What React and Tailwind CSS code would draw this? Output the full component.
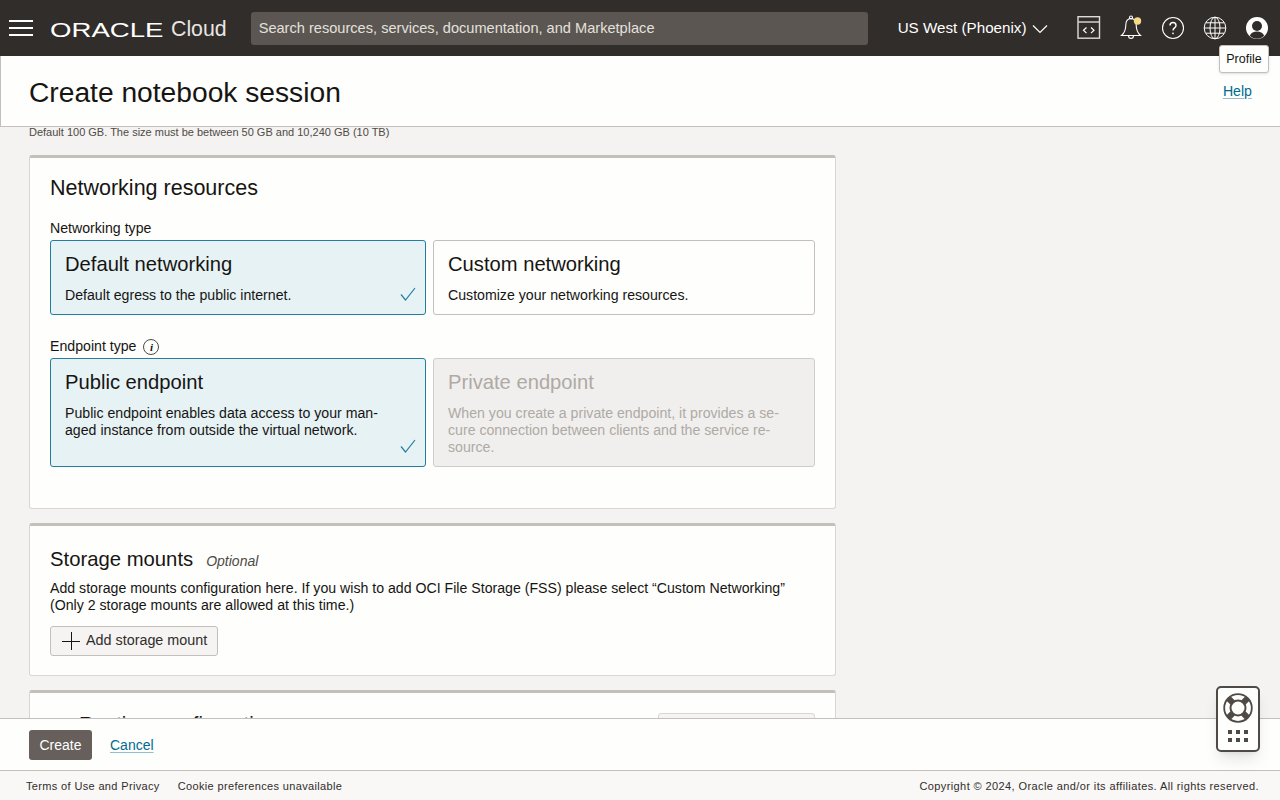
import { ChevronRight } from "lucide-react";

function HeaderIcons() {
  return (
    <div className="flex items-center gap-[18px] ml-[29px] shrink-0 text-white">
      {/* code editor */}
      <svg width="24" height="24" viewBox="0 0 24 24" fill="none" stroke="#dedcd9" strokeWidth="1.4">
        <rect x="1" y="0.700" width="21.500" height="21.500" />
        <path d="M1 6h21.500" />
        <path d="M9.500 11.500l-3 2.800 3 2.800M14 11.500l3 2.800-3 2.800" stroke="#fff" strokeWidth="1.200" />
      </svg>
      {/* bell */}
      <svg width="24" height="26" viewBox="0 0 24 26" fill="none" stroke="#fff" strokeWidth="1.100">
        <path d="M12 3.500c-3.600 0-5.200 3-5.200 6.500 0 4.500-2 8.500-4.300 10.500h19c-2.300-2-4.300-6-4.300-10.500 0-3.500-1.600-6.500-5.200-6.500z" />
        <circle cx="12" cy="2.500" r="1.500" />
        <path d="M9.500 20.500c0 2 1 3 2.500 3s2.500-1 2.500-3" />
        <circle cx="18.500" cy="6" r="3.700" fill="#f6d889" stroke="none" />
      </svg>
      {/* help */}
      <svg width="24" height="24" viewBox="0 0 24 24" fill="none" stroke="#fff" strokeWidth="1.100">
        <circle cx="12" cy="12" r="10.500" />
        <path d="M9 9.500c0-1.800 1.300-3 3-3s3 1.200 3 2.900c0 2.400-3 2.500-3 5" strokeWidth="1.400" />
        <circle cx="12" cy="17.300" r="0.900" fill="#fff" stroke="none" />
      </svg>
      {/* language */}
      <svg width="24" height="24" viewBox="0 0 24 24" fill="none" stroke="#fff" strokeWidth="1">
        <circle cx="12" cy="12" r="10.800" />
        <ellipse cx="12" cy="12" rx="5" ry="10.800" />
        <path d="M12 1.200v21.600M1.200 12h21.600M2.800 6.800h18.400M2.800 17.200h18.400" />
      </svg>
      {/* profile */}
      <svg width="24" height="24" viewBox="0 0 24 24">
        <circle cx="12" cy="12" r="11" fill="#fff" />
        <circle cx="12" cy="10" r="5" fill="#312d2a" />
        <path d="M4.800 19.800c1.200-3 4-4.300 7.200-4.300s6 1.300 7.200 4.300c-2 1.900-4.400 3-7.200 3s-5.200-1.100-7.200-3z" fill="#312d2a" />
      </svg>
    </div>
  );
}

function Header() {
  return (
    <header className="h-14 shrink-0 bg-[#312d2a] flex items-center pl-[9px] text-white">
      <div className="w-6 shrink-0 flex flex-col gap-[5px]">
        <div className="h-[2px] bg-white"></div>
        <div className="h-[2px] bg-white"></div>
        <div className="h-[2px] bg-white"></div>
      </div>
      <div className="ml-[17px] mt-[3px] w-[113px] shrink-0 text-[20px] leading-none origin-left scale-x-[1.38] whitespace-nowrap">ORACLE</div>
      <div className="ml-[8px] mt-[3px] shrink-0 text-[21.300px] text-[#e8e6e3]">Cloud</div>
      <div className="ml-[24px] w-[617px] h-[33px] shrink-0 bg-[#5b5652] rounded-[3px] flex items-center px-2 pt-[2px] text-[14.600px] text-[#e4e1dd]">
        Search resources, services, documentation, and Marketplace
      </div>
      <div className="ml-[30px] shrink-0 flex items-center gap-[5px] text-[15.200px] whitespace-nowrap">
        US West (Phoenix)
        <svg width="16" height="10" viewBox="0 0 16 10" fill="none" stroke="#fff" strokeWidth="1.200" className="mt-[2px]">
          <path d="M1 1.500l7 7 7-7" />
        </svg>
      </div>
      <HeaderIcons />
    </header>
  );
}

function OptionCard({ title, text, selected, disabled, className }) {
  let colors = "border-[#c4bfba] text-[#161513]";
  if (selected) colors = "border-[#227e9e] bg-[#e7f2f5] text-[#161513]";
  if (disabled) colors = "border-[#d0ccc8] bg-[#f1efed] text-[#aeaaa5]";
  return (
    <div className={`relative rounded-[3px] border px-[14px] pt-[10px] ${colors} ${className}`}>
      <div className="text-[20.200px] leading-[26px]">{title}</div>
      <div className="mt-[10px] text-[14.150px] leading-[17px]">
        {text.map((line) => (
          <div key={line}>{line}</div>
        ))}
      </div>
      {selected && (
        <svg width="16" height="14" viewBox="0 0 16 14" fill="none" stroke="#227e9e" strokeWidth="1.200" className="absolute right-[9px] bottom-[13px]">
          <path d="M1 7.500l4.500 5.500L15 1" />
        </svg>
      )}
    </div>
  );
}

function Panel({ children, className }) {
  return (
    <section className={`bg-[#fefefc] border border-[#d9d6d2] border-t-[3px] border-t-[#c4bfba] rounded-[3px] px-5 ${className}`}>
      {children}
    </section>
  );
}

function Content() {
  return (
    <main className="flex-1 min-h-0 overflow-hidden bg-[#f4f3f1] pl-[29px]">
      <div className="w-[807px]">
        <p className="text-[11px] leading-[11px] text-[#4f4a46]">
          Default 100 GB. The size must be between 50 GB and 10,240 GB (10 TB)
        </p>
        <Panel className="mt-[17px] h-[354px] pt-[17px]">
          <h2 className="text-[21.500px] leading-[26px] text-[#161513]">Networking resources</h2>
          <div className="mt-[19px] text-[14.150px] leading-[17px] text-[#161513]">Networking type</div>
          <div className="mt-[3px] grid grid-cols-[376px_382px] gap-[7px]">
            <OptionCard className="h-[75px]" selected title="Default networking" text={["Default egress to the public internet."]} />
            <OptionCard className="h-[75px]" title="Custom networking" text={["Customize your networking resources."]} />
          </div>
          <div className="mt-[23px] flex items-center gap-[7px] text-[14.150px] leading-[17px] text-[#161513]">
            Endpoint type
            <span className="w-4 h-4 rounded-full border border-[#4f4a46] text-[11px] leading-[14px] text-center italic font-bold font-['Liberation_Serif',serif]">i</span>
          </div>
          <div className="mt-[3px] grid grid-cols-[376px_382px] gap-[7px]">
            <OptionCard className="h-[109px]" selected title="Public endpoint" text={["Public endpoint enables data access to your man-", "aged instance from outside the virtual network."]} />
            <OptionCard className="h-[109px]" disabled title="Private endpoint" text={["When you create a private endpoint, it provides a se-", "cure connection between clients and the service re-", "source."]} />
          </div>
        </Panel>
        <Panel className="mt-[14px] h-[153px] pt-[20px]">
          <h2 className="flex items-baseline gap-[13px] text-[20.300px] leading-[26px] text-[#161513]">
            Storage mounts
            <span className="text-sm italic text-[#4f4a46]">Optional</span>
          </h2>
          <p className="mt-[8px] text-[14.150px] leading-[17px] text-[#161513]">
            Add storage mounts configuration here. If you wish to add OCI File Storage (FSS) please select “Custom Networking”
            <br />
            (Only 2 storage mounts are allowed at this time.)
          </p>
          <button className="mt-[12px] h-[30px] w-[168px] flex items-center gap-[6px] pl-[11px] bg-[#f5f4f2] border border-[#c4bfba] rounded-[3px] text-[14.350px] text-[#312d2a]">
            <svg width="18" height="18" viewBox="0 0 18 18" stroke="#161513" strokeWidth="1">
              <path d="M0 9.500h18M9.500 0v18" />
            </svg>
            Add storage mount
          </button>
        </Panel>
        <Panel className="mt-[14px] h-[100px] pt-[18px]">
          <div className="flex items-start justify-between">
            <h2 className="flex items-center gap-[9px] text-[20.300px] leading-[26px] text-[#161513]">
              <ChevronRight size={20} strokeWidth={1.200} />
              Runtime configuration
            </h2>
            <div className="mt-[2px] w-[157px] h-[30px] bg-[#f5f4f2] border border-[#d9d6d2] rounded-[3px]"></div>
          </div>
        </Panel>
      </div>
    </main>
  );
}

function HelpWidget() {
  return (
    <div className="absolute right-[20px] top-[686px] w-[44px] h-[66px] bg-[#fefefc] border-2 border-[#4f4a46] rounded-[5px] shadow-lg flex flex-col items-center pt-[5px]">
      <svg width="30" height="30" viewBox="0 0 30 30" fill="none" stroke="#4f4a46">
        <circle cx="15" cy="15" r="13.800" strokeWidth="1.800" />
        <circle cx="15" cy="15" r="7.500" strokeWidth="2" />
        <path d="M9.700 9.700L5.200 5.200M20.300 9.700l4.500-4.500M9.700 20.300l-4.500 4.500M20.300 20.300l4.500 4.500" strokeWidth="6" />
      </svg>
      <div className="mt-[7px] grid grid-cols-3 gap-x-[4px] gap-y-[4px]">
        {[1, 2, 3, 4, 5, 6].map((n) => (
          <div key={n} className="w-[4px] h-[4px] bg-[#4f4a46]"></div>
        ))}
      </div>
    </div>
  );
}

export default function App() {
  return (
    <div className="relative h-screen flex flex-col overflow-hidden font-['Liberation_Sans',Arial,sans-serif] bg-[#fefefc]">
      <Header />
      <div className="h-[71px] shrink-0 bg-[#fefefc] border-b border-l border-[#c4bfba] pl-[28px] flex justify-between pr-[28px]">
        <h1 className="text-[28.200px] leading-[36px] mt-[18px] text-[#161513]">Create notebook session</h1>
        <a className="mt-[27px] text-[14.150px] leading-[17px] text-[#006b8f] underline underline-offset-2 decoration-[#8fc0d0]">Help</a>
      </div>
      <Content />
      <div className="h-[52px] shrink-0 bg-[#fefefc] border-t border-[#c4bfba] pl-[29px] flex items-center">
        <button className="w-[63px] h-[30px] bg-[#665f5b] rounded-[3px] text-sm text-white">Create</button>
        <a className="ml-[18px] text-sm text-[#006b8f] underline underline-offset-2 decoration-[#8fc0d0]">Cancel</a>
      </div>
      <footer className="h-[30px] shrink-0 bg-[#f9f8f7] border-t border-[#c4bfba] pl-[26px] pr-[21px] pt-[1px] flex items-center justify-between text-[11px] tracking-[0.350px] text-[#312d2a]">
        <div className="flex gap-[18px]">
          <span>Terms of Use and Privacy</span>
          <span>Cookie preferences unavailable</span>
        </div>
        <span className="tracking-[0.400px]">Copyright © 2024, Oracle and/or its affiliates. All rights reserved.</span>
      </footer>
      <div className="absolute left-[1219px] top-[45px] w-[50px] h-[28px] bg-[#fefefc] border border-[#c4bfba] rounded-[3px] shadow text-[12.500px] leading-[27px] text-center text-[#161513]">
        Profile
      </div>
      <HelpWidget />
    </div>
  );
}
